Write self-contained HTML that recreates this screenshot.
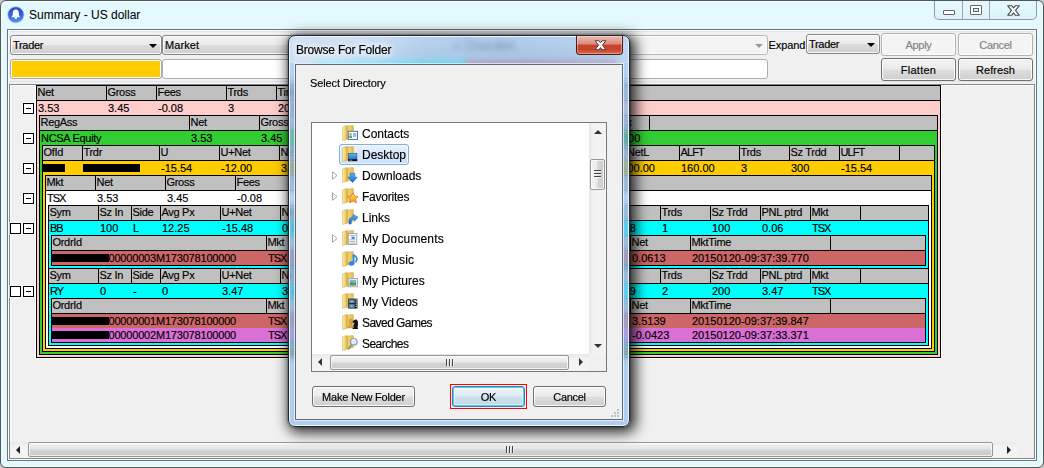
<!DOCTYPE html><html><head><meta charset="utf-8"><title>Summary - US dollar</title><style>
*{box-sizing:border-box;margin:0;padding:0}
html,body{width:1044px;height:468px;overflow:hidden;background:#c8c8c8}
body{-webkit-text-stroke-width:.16px;position:relative;font-family:"Liberation Sans",sans-serif;font-size:11px;color:#000}
.a{position:absolute}
.t{position:absolute;white-space:nowrap;line-height:14px;height:14px}
/* main window */
#win{left:0;top:0;width:1044px;height:468px;border:1px solid #4c595b;border-radius:6px;background:#e4f9fe;box-shadow:inset 0 0 0 1px #f4fcfe}
#client{left:7px;top:29px;width:1030px;height:432px;border:1px solid #6b7678;background:#f0f0f0;box-shadow:inset 0 0 0 1px #fff}
#title{-webkit-text-stroke-width:.05px;left:29px;top:8.400px;font-size:12px;line-height:14px;white-space:nowrap}
.btn{letter-spacing:-.3px;position:absolute;border:1px solid #707070;border-radius:3px;background:linear-gradient(#f2f2f2 0%,#ebebeb 48%,#dddddd 52%,#cfcfcf 100%);box-shadow:inset 0 0 0 1px rgba(255,255,255,.85);text-align:center;white-space:nowrap}
.btn.dis{background:#f4f4f4;border-color:#adb2b5;color:#838383;box-shadow:inset 0 0 0 1px #fcfcfc}
.combo{letter-spacing:-.3px;position:absolute;border:1px solid #858585;border-radius:3px;background:linear-gradient(#f2f2f2 0%,#ebebeb 48%,#dddddd 52%,#cfcfcf 100%);box-shadow:inset 0 0 0 1px rgba(255,255,255,.85);white-space:nowrap}
.arrow{position:absolute;width:0;height:0;border-left:4px solid transparent;border-right:4px solid transparent;border-top:4px solid #000}
/* tree */
.box{position:absolute;border:1px solid #000}
.hc{position:absolute;height:16px;border:1px solid #000;background:#c0c0c0;line-height:12px;padding-left:.5px;white-space:nowrap;overflow:hidden;letter-spacing:-.3px}
.l{letter-spacing:-.3px}
.o{letter-spacing:-.19px}
.u{letter-spacing:-1.05px}
.pm{position:absolute;width:11px;height:11px;border:1px solid #000;background:#fff;box-shadow:0 0 0 1px rgba(255,255,255,.55)}
.pm.m:after{content:"";position:absolute;left:2px;top:4px;width:5px;height:1px;background:#000}
.bar{position:absolute;background:#000;height:8px}
</style></head><body>
<div id="win" class="a"></div>
<svg class="a" style="left:6px;top:5.200px" width="19" height="19" viewBox="0 0 19 19"><defs><linearGradient id="ig" x1="0" y1="0" x2="0" y2="1"><stop offset="0" stop-color="#2a4cd4"/><stop offset=".5" stop-color="#335fe2"/><stop offset="1" stop-color="#5596fb"/></linearGradient></defs><circle cx="9.800" cy="9.800" r="8.100" fill="url(#ig)" stroke="#b9c8f6" stroke-width="0.7"/><g transform="translate(.3 .3)"><path d="M9.5 4.3c-2 0-3 1.6-3 3.6 0 2-.6 3.2-1.500 4.100h9c-.9-.9-1.500-2.100-1.500-4.100 0-2-1-3.600-3-3.600z" fill="#fff"/><circle cx="9.5" cy="12.6" r="1.200" fill="#fff"/></g></svg>
<div id="title" class="a">Summary - US dollar</div>
<div class="a" style="left:934px;top:1px;width:103px;height:19px;border:1px solid #8a9aa0;border-top:none;border-radius:0 0 5px 5px;background:linear-gradient(#e6f8fd,#dcf2f9)"></div>
<div class="a" style="left:962px;top:1px;width:1px;height:18px;background:#9aa8ad"></div><div class="a" style="left:989px;top:1px;width:1px;height:18px;background:#9aa8ad"></div>
<div class="a" style="left:943px;top:10px;width:12px;height:5px;border:1px solid #5d686c;background:#fff;border-radius:1px"></div>
<div class="a" style="left:970px;top:5px;width:12px;height:10px;border:1px solid #5d686c;background:#fff;border-radius:1px"></div><div class="a" style="left:973px;top:8px;width:6px;height:4px;border:1px solid #5d686c;background:#dbeef5"></div>
<svg class="a" style="left:1007px;top:4.500px" width="13" height="11" viewBox="0 0 13 11"><path d="M0.800 0.800h4l1.700 2.100 1.700-2.100h4l-3.700 4.600 3.700 4.800h-4l-1.700-2.300-1.700 2.300h-4l3.700-4.800z" fill="#fff" stroke="#434c50" stroke-width="1.100" stroke-linejoin="round"/></svg>
<div id="client" class="a"></div>
<div class="combo" style="left:10px;top:35px;width:152px;height:20px;"><span class="t" style="left:2px;top:2px;line-height:15px">Trader</span><span class="arrow" style="right:4px;top:8px;border-top-color:#000"></span></div>
<div class="combo" style="left:162px;top:35px;width:152px;height:20px;letter-spacing:.1px;"><span class="t" style="left:2px;top:2px;line-height:15px">Market</span><span class="arrow" style="right:4px;top:8px;border-top-color:#000"></span></div>
<div class="combo" style="left:314px;top:35px;width:152px;height:20px;"><span class="t" style="left:2px;top:2px;line-height:15px">Symbol</span><span class="arrow" style="right:4px;top:8px;border-top-color:#000"></span></div>
<div class="combo" style="left:466px;top:35px;width:152px;height:20px;"><span class="t" style="left:2px;top:2px;line-height:15px">Execution</span><span class="arrow" style="right:4px;top:8px;border-top-color:#000"></span></div>
<div class="combo" style="left:618px;top:35px;width:150px;height:20px;background:#f4f4f4;border-color:#b5b8bb;box-shadow:inset 0 0 0 1px #fbfbfb;"><span class="t" style="left:2px;top:2px;line-height:15px"></span><span class="arrow" style="right:4px;top:8px;border-top-color:#9a9a9a"></span></div>
<div class="t" style="left:768.500px;top:38px;letter-spacing:-.1px">Expand</div>
<div class="combo" style="left:806px;top:34px;width:74px;height:20px;"><span class="t" style="left:2px;top:2px;line-height:15px">Trader</span><span class="arrow" style="right:4px;top:8px;border-top-color:#000"></span></div>
<div class="btn dis" style="left:881px;top:33px;width:75px;height:23px;line-height:22px">Apply</div>
<div class="btn dis" style="left:958px;top:33px;width:75px;height:23px;line-height:22px">Cancel</div>
<div class="btn" style="left:881px;top:58px;width:75px;height:23px;line-height:22px;letter-spacing:0.25px">Flatten</div>
<div class="btn" style="left:958px;top:58px;width:75px;height:23px;line-height:22px;letter-spacing:0.05px">Refresh</div>
<div class="a" style="left:10px;top:59px;width:152px;height:20px;border:1px solid #abadb3;border-radius:3px;background:#ffcc00;box-shadow:inset 0 0 0 1px #fff"></div>
<div class="a" style="left:162px;top:59px;width:606px;height:20px;border:1px solid #abadb3;border-radius:3px;background:#fff"></div>
<div class="a" style="left:314px;top:60px;width:152px;height:18px;background:#00ffff"></div><div class="a" style="left:466px;top:60px;width:152px;height:18px;background:#cd6666"></div>
<div class="a" style="left:9px;top:81px;width:1026px;height:1px;background:#dde3ea"></div><div class="a" style="left:9px;top:31px;width:1026px;height:1px;background:#dfe4ea"></div>
<div class="a" style="left:9px;top:84px;width:1026px;height:375px;border:1px solid #828790;background:#f0f0f0;box-shadow:inset 1px 1px 0 0 #fff"></div>
<div class="a" style="left:35px;top:85px;width:1px;height:273px;background:#fff"></div><div class="a" style="left:941px;top:85px;width:1px;height:273px;background:#fff"></div><div class="a" style="left:35px;top:358px;width:907px;height:1px;background:#fff"></div>
<div class="box" style="left:36px;top:85px;width:905px;height:273px;background:#ffcccc"></div>
<div class="hc" style="left:36px;top:85px;width:71px">Net</div>
<div class="hc" style="left:106px;top:85px;width:51px">Gross</div>
<div class="hc" style="left:156px;top:85px;width:71px">Fees</div>
<div class="hc" style="left:226px;top:85px;width:51px">Trds</div>
<div class="hc" style="left:276px;top:85px;width:71px">Time</div>
<div class="hc" style="left:346px;top:85px;width:71px"></div>
<div class="hc" style="left:416px;top:85px;width:71px"></div>
<div class="hc" style="left:486px;top:85px;width:71px"></div>
<div class="hc" style="left:556px;top:85px;width:385px"></div>
<div class="a" style="left:37px;top:101px;width:903px;height:14px;background:#ffcccc"></div>
<div class="t" style="left:38px;top:101px">3.53</div>
<div class="t" style="left:108px;top:101px">3.45</div>
<div class="t" style="left:158px;top:101px">-0.08</div>
<div class="t" style="left:228px;top:101px">3</div>
<div class="t" style="left:278px;top:101px">20150120</div>
<div class="pm m" style="left:23px;top:103px"></div>
<div class="box" style="left:39px;top:115px;width:899px;height:240px;background:#32cd32"></div>
<div class="hc" style="left:39px;top:115px;width:151px">RegAss</div>
<div class="hc" style="left:189px;top:115px;width:71px">Net</div>
<div class="hc" style="left:259px;top:115px;width:71px">Gross</div>
<div class="hc" style="left:329px;top:115px;width:61px"></div>
<div class="hc" style="left:389px;top:115px;width:61px"></div>
<div class="hc" style="left:449px;top:115px;width:61px"></div>
<div class="hc" style="left:509px;top:115px;width:61px"></div>
<div class="hc" style="left:569px;top:115px;width:81px;padding-left:56.5px">x</div>
<div class="hc" style="left:649px;top:115px;width:289px"></div>
<div class="a" style="left:40px;top:131px;width:897px;height:14px;background:#32cd32"></div>
<div class="t l" style="left:41px;top:131px">NCSA Equity</div>
<div class="t" style="left:191px;top:131px">3.53</div>
<div class="t" style="left:261px;top:131px">3.45</div>
<div class="t" style="left:622px;top:131px">300</div>
<div class="pm m" style="left:23px;top:133px"></div>
<div class="box" style="left:42px;top:145px;width:893px;height:207px;background:#ffcc00"></div>
<div class="hc" style="left:42px;top:145px;width:41px">OfId</div>
<div class="hc" style="left:82px;top:145px;width:78px">Trdr</div>
<div class="hc" style="left:159px;top:145px;width:61px">U</div>
<div class="hc" style="left:219px;top:145px;width:61px">U+Net</div>
<div class="hc" style="left:279px;top:145px;width:61px">Net</div>
<div class="hc" style="left:339px;top:145px;width:61px"></div>
<div class="hc" style="left:399px;top:145px;width:61px"></div>
<div class="hc" style="left:459px;top:145px;width:61px"></div>
<div class="hc" style="left:519px;top:145px;width:61px"></div>
<div class="hc" style="left:579px;top:145px;width:42px"></div>
<div class="hc" style="left:620px;top:145px;width:60px;padding-left:6px">NetL</div>
<div class="hc" style="left:679px;top:145px;width:61px;letter-spacing:-.9px">ALFT</div>
<div class="hc" style="left:739px;top:145px;width:51px">Trds</div>
<div class="hc" style="left:789px;top:145px;width:51px">Sz Trdd</div>
<div class="hc" style="left:839px;top:145px;width:61px;letter-spacing:-.9px">ULFT</div>
<div class="hc" style="left:899px;top:145px;width:36px"></div>
<div class="a" style="left:43px;top:161px;width:891px;height:14px;background:#ffcc00"></div>
<div class="t" style="left:161px;top:161px">-15.54</div>
<div class="t" style="left:221px;top:161px">-12.00</div>
<div class="t" style="left:281px;top:161px">3.53</div>
<div class="t" style="left:621.3px;top:161px">100.00</div>
<div class="t" style="left:681px;top:161px">160.00</div>
<div class="t" style="left:741px;top:161px">3</div>
<div class="t" style="left:791px;top:161px">300</div>
<div class="t" style="left:841px;top:161px">-15.54</div>
<div class="bar" style="left:43px;top:164px;width:22px"></div>
<div class="bar" style="left:83px;top:164px;width:57px"></div>
<div class="pm m" style="left:23px;top:163px"></div>
<div class="box" style="left:45px;top:175px;width:887px;height:174px;background:#fff"></div>
<div class="hc" style="left:45px;top:175px;width:51px">Mkt</div>
<div class="hc" style="left:95px;top:175px;width:71px">Net</div>
<div class="hc" style="left:165px;top:175px;width:71px">Gross</div>
<div class="hc" style="left:235px;top:175px;width:71px">Fees</div>
<div class="hc" style="left:305px;top:175px;width:627px"></div>
<div class="a" style="left:46px;top:191px;width:885px;height:14px;background:#fff"></div>
<div class="t u" style="left:47px;top:191px">TSX</div>
<div class="t" style="left:97px;top:191px">3.53</div>
<div class="t" style="left:167px;top:191px">3.45</div>
<div class="t" style="left:237px;top:191px">-0.08</div>
<div class="pm m" style="left:23px;top:193px"></div>
<div class="box" style="left:48px;top:205px;width:881px;height:141px;background:#00ffff"></div>
<div class="hc" style="left:48px;top:205px;width:51px">Sym</div>
<div class="hc" style="left:98px;top:205px;width:34px">Sz In</div>
<div class="hc" style="left:131px;top:205px;width:30px">Side</div>
<div class="hc" style="left:160px;top:205px;width:61px">Avg Px</div>
<div class="hc" style="left:220px;top:205px;width:61px">U+Net</div>
<div class="hc" style="left:280px;top:205px;width:61px">Net</div>
<div class="hc" style="left:340px;top:205px;width:61px"></div>
<div class="hc" style="left:400px;top:205px;width:61px"></div>
<div class="hc" style="left:460px;top:205px;width:61px"></div>
<div class="hc" style="left:520px;top:205px;width:61px"></div>
<div class="hc" style="left:580px;top:205px;width:81px"></div>
<div class="hc" style="left:660px;top:205px;width:51px">Trds</div>
<div class="hc" style="left:710px;top:205px;width:51px">Sz Trdd</div>
<div class="hc" style="left:760px;top:205px;width:51px">PNL ptrd</div>
<div class="hc" style="left:810px;top:205px;width:51px">Mkt</div>
<div class="hc" style="left:860px;top:205px;width:69px"></div>
<div class="a" style="left:49px;top:221px;width:879px;height:14px;background:#00ffff"></div>
<div class="t u" style="left:50px;top:221px">BB</div>
<div class="t" style="left:100px;top:221px">100</div>
<div class="t l" style="left:133px;top:221px">L</div>
<div class="t" style="left:162px;top:221px">12.25</div>
<div class="t" style="left:222px;top:221px">-15.48</div>
<div class="t" style="left:282px;top:221px">0.06</div>
<div class="t" style="left:629.8px;top:221px">8</div>
<div class="t" style="left:662px;top:221px">1</div>
<div class="t" style="left:712px;top:221px">100</div>
<div class="t" style="left:762px;top:221px">0.06</div>
<div class="t u" style="left:812px;top:221px">TSX</div>
<div class="pm" style="left:10px;top:223px"></div>
<div class="pm m" style="left:23px;top:223px"></div>
<div class="box" style="left:51px;top:235px;width:875px;height:31px;background:#cd6666"></div>
<div class="hc" style="left:51px;top:235px;width:216px">OrdrId</div>
<div class="hc" style="left:266px;top:235px;width:51px">Mkt</div>
<div class="hc" style="left:316px;top:235px;width:61px"></div>
<div class="hc" style="left:376px;top:235px;width:61px"></div>
<div class="hc" style="left:436px;top:235px;width:61px"></div>
<div class="hc" style="left:496px;top:235px;width:61px"></div>
<div class="hc" style="left:556px;top:235px;width:75px"></div>
<div class="hc" style="left:630px;top:235px;width:61px">Net</div>
<div class="hc" style="left:690px;top:235px;width:141px">MktTime</div>
<div class="hc" style="left:830px;top:235px;width:96px"></div>
<div class="a" style="left:52px;top:251px;width:873px;height:14px;background:#cd6666"></div>
<div class="t o" style="left:108.5px;top:251px">00000003M173078100000</div>
<div class="t u" style="left:268px;top:251px">TSX</div>
<div class="t" style="left:632px;top:251px">0.0613</div>
<div class="t" style="left:692px;top:251px">20150120-09:37:39.770</div>
<div class="bar" style="left:52px;top:254px;width:57px"></div>
<div class="hc" style="left:48px;top:268px;width:51px">Sym</div>
<div class="hc" style="left:98px;top:268px;width:34px">Sz In</div>
<div class="hc" style="left:131px;top:268px;width:30px">Side</div>
<div class="hc" style="left:160px;top:268px;width:61px">Avg Px</div>
<div class="hc" style="left:220px;top:268px;width:61px">U+Net</div>
<div class="hc" style="left:280px;top:268px;width:61px">Net</div>
<div class="hc" style="left:340px;top:268px;width:61px"></div>
<div class="hc" style="left:400px;top:268px;width:61px"></div>
<div class="hc" style="left:460px;top:268px;width:61px"></div>
<div class="hc" style="left:520px;top:268px;width:61px"></div>
<div class="hc" style="left:580px;top:268px;width:81px"></div>
<div class="hc" style="left:660px;top:268px;width:51px">Trds</div>
<div class="hc" style="left:710px;top:268px;width:51px">Sz Trdd</div>
<div class="hc" style="left:760px;top:268px;width:51px">PNL ptrd</div>
<div class="hc" style="left:810px;top:268px;width:51px">Mkt</div>
<div class="hc" style="left:860px;top:268px;width:69px"></div>
<div class="a" style="left:49px;top:284px;width:879px;height:14px;background:#00ffff"></div>
<div class="t u" style="left:50px;top:284px">RY</div>
<div class="t" style="left:100px;top:284px">0</div>
<div class="t" style="left:133px;top:284px">-</div>
<div class="t" style="left:162px;top:284px">0</div>
<div class="t" style="left:222px;top:284px">3.47</div>
<div class="t" style="left:282px;top:284px">3.47</div>
<div class="t" style="left:629.8px;top:284px">9</div>
<div class="t" style="left:662px;top:284px">2</div>
<div class="t" style="left:712px;top:284px">200</div>
<div class="t" style="left:762px;top:284px">3.47</div>
<div class="t u" style="left:812px;top:284px">TSX</div>
<div class="pm" style="left:10px;top:286px"></div>
<div class="pm m" style="left:23px;top:286px"></div>
<div class="box" style="left:51px;top:298px;width:875px;height:45px;background:#cd6666"></div>
<div class="hc" style="left:51px;top:298px;width:216px">OrdrId</div>
<div class="hc" style="left:266px;top:298px;width:51px">Mkt</div>
<div class="hc" style="left:316px;top:298px;width:61px"></div>
<div class="hc" style="left:376px;top:298px;width:61px"></div>
<div class="hc" style="left:436px;top:298px;width:61px"></div>
<div class="hc" style="left:496px;top:298px;width:61px"></div>
<div class="hc" style="left:556px;top:298px;width:75px"></div>
<div class="hc" style="left:630px;top:298px;width:61px">Net</div>
<div class="hc" style="left:690px;top:298px;width:141px">MktTime</div>
<div class="hc" style="left:830px;top:298px;width:96px"></div>
<div class="a" style="left:52px;top:314px;width:873px;height:14px;background:#cd6666"></div>
<div class="t o" style="left:108.5px;top:314px">00000001M173078100000</div>
<div class="t u" style="left:268px;top:314px">TSX</div>
<div class="t" style="left:632px;top:314px">3.5139</div>
<div class="t" style="left:692px;top:314px">20150120-09:37:39.847</div>
<div class="bar" style="left:52px;top:317px;width:57px"></div>
<div class="a" style="left:52px;top:328px;width:873px;height:14px;background:#da70d6"></div>
<div class="t o" style="left:108.5px;top:328px">00000002M173078100000</div>
<div class="t u" style="left:268px;top:328px">TSX</div>
<div class="t" style="left:632px;top:328px">-0.0423</div>
<div class="t" style="left:692px;top:328px">20150120-09:37:33.371</div>
<div class="bar" style="left:52px;top:331px;width:57px"></div>
<div class="a" style="left:10px;top:442px;width:1007px;height:16px;background:linear-gradient(#e9e9e9,#f3f3f3 30%,#f3f3f3)"></div>
<div class="a" style="left:28px;top:442px;width:965px;height:15px;border:1px solid #979797;border-radius:2px;background:linear-gradient(#f3f3f3 0%,#e7e7e7 40%,#d3d3d3 58%,#c6c6c6 100%);box-shadow:inset 0 0 0 1px rgba(255,255,255,.7)"></div>
<div class="a" style="left:16px;top:446px;width:0;height:0;border-top:4px solid transparent;border-bottom:4px solid transparent;border-right:4px solid #222"></div>
<div class="a" style="left:1007px;top:446px;width:0;height:0;border-top:4px solid transparent;border-bottom:4px solid transparent;border-left:4px solid #222"></div>
<div class="a" style="left:506px;top:446px;width:2px;height:7px;background:linear-gradient(90deg,#444 0,#444 60%,#f4f4f4 60%)"></div>
<div class="a" style="left:509px;top:446px;width:2px;height:7px;background:linear-gradient(90deg,#444 0,#444 60%,#f4f4f4 60%)"></div>
<div class="a" style="left:512px;top:446px;width:2px;height:7px;background:linear-gradient(90deg,#444 0,#444 60%,#f4f4f4 60%)"></div>
<style>
#dshadow{left:288px;top:35px;width:342px;height:392px;border-radius:7px;box-shadow:3px 3px 13px 3px rgba(0,0,0,.78),0 0 3px 0 rgba(0,0,0,.5)}
#dglass{left:288px;top:35px;width:342px;height:392px;border-radius:7px;border:1px solid #1e2a38;-webkit-backdrop-filter:blur(3.5px);backdrop-filter:blur(3.5px);background:rgba(140,186,238,.64);box-shadow:inset 0 0 0 1px rgba(255,255,255,.8)}
#dclient{left:295px;top:64px;width:328px;height:356px;border:1px solid #5d6b7a;background:#f0f0f0;box-shadow:0 0 0 1px rgba(255,255,255,.65)}
#dtitle{left:296px;top:43px;letter-spacing:-.2px;font-size:12px;line-height:14px;white-space:nowrap;text-shadow:0 0 6px #fff,0 0 8px #fff,0 0 10px #fff}
#dclose{left:576px;top:36px;width:47px;height:19px;border:1px solid #4a1f1a;border-top:none;border-radius:0 0 4px 4px;background:linear-gradient(#ecbcb0 0%,#dd8b79 45%,#c9432a 50%,#c8452c 75%,#d9694a 100%);box-shadow:inset 0 0 0 1px rgba(255,255,255,.35)}
#lb{left:311px;top:122px;width:296px;height:250px;border:1px solid #767a80;background:#fff}
.it{position:absolute;left:362px;font-size:12px;line-height:16px;height:16px;white-space:nowrap}
.ic{position:absolute;left:342px;width:16px;height:16px}
.ex{position:absolute;left:332px;width:6px;height:9px}
.dbtn{position:absolute;height:21px;border:1px solid #707070;border-radius:3px;background:linear-gradient(#f2f2f2 0%,#ebebeb 48%,#dddddd 52%,#cfcfcf 100%);box-shadow:inset 0 0 0 1px rgba(255,255,255,.85);text-align:center;line-height:21px;white-space:nowrap;font-size:11px;letter-spacing:-.3px}
</style>
<div id="dshadow" class="a"></div><div id="dglass" class="a"></div>
<div class="a" style="left:290px;top:37px;width:338px;height:26px;border-radius:5px 5px 0 0;background:linear-gradient(100deg,rgba(255,255,255,.42) 0%,rgba(255,255,255,.5) 14%,rgba(255,255,255,.12) 40%,rgba(255,255,255,.05) 70%,rgba(255,255,255,.2) 100%)"></div>
<div id="dtitle" class="a">Browse For Folder</div>
<div id="dclose" class="a"></div>
<svg class="a" style="left:594px;top:40px" width="13" height="10.500" viewBox="0 0 13 11"><path d="M0.800 0.800h4l1.700 2.100 1.700-2.100h4l-3.700 4.600 3.700 4.800h-4l-1.700-2.300-1.700 2.300h-4l3.700-4.800z" fill="#fff" stroke="#47383a" stroke-width="1" stroke-linejoin="round"/></svg>
<div id="dclient" class="a"></div>
<div class="t" style="left:310px;top:76px;letter-spacing:-.12px">Select Directory</div>
<div id="lb" class="a"></div>
<svg width="0" height="0" style="position:absolute"><defs>
<linearGradient id="fg1" x1="0" y1="0" x2="1" y2="0"><stop offset="0" stop-color="#fbeeb4"/><stop offset=".6" stop-color="#f0d376"/><stop offset="1" stop-color="#e0b446"/></linearGradient>
<linearGradient id="fg2" x1="0" y1="0" x2="1" y2="0"><stop offset="0" stop-color="#dcb24a"/><stop offset=".3" stop-color="#efd277"/><stop offset="1" stop-color="#e3b94e"/></linearGradient>
<linearGradient id="bl" x1="0" y1="0" x2="0" y2="1"><stop offset="0" stop-color="#5db4f6"/><stop offset="1" stop-color="#1468d2"/></linearGradient>
<linearGradient id="st" x1="0" y1="0" x2="0" y2="1"><stop offset="0" stop-color="#ffe860"/><stop offset="1" stop-color="#f5921a"/></linearGradient>
<g id="fold"><path d="M4.800 1.100L10.800 0.500Q11.400 0.500 11.400 1.100L11.400 12.400L4.800 14.200Z" fill="url(#fg2)" stroke="#d1aa46" stroke-width="0.5"/><path d="M0.400 2.200L4.200 0.500L5 0.900L5 14.200L1 15.500L0.400 15Z" fill="url(#fg1)" stroke="#cda43e" stroke-width="0.5"/></g>
</defs></svg>
<svg class="ic" style="top:124.5px" viewBox="0 0 16 16"><use href="#fold"/><rect x="6.300" y="6.300" width="9.200" height="8.200" fill="#fdfdfd" stroke="#3f7ab8" stroke-width="1"/><circle cx="8.600" cy="9.200" r="1.300" fill="#e0a060"/><rect x="7.300" y="10.600" width="2.600" height="2.400" fill="#5c9c5c"/><path d="M11 9h3.200M11 11h3.200" stroke="#4a78b0" stroke-width="1"/></svg>
<div class="it" style="top:126px">Contacts</div>
<div class="a" style="left:339px;top:144px;width:70px;height:21px;border:1px solid #84acdd;border-radius:3px;background:linear-gradient(#e8f2fd,#c9dffa);box-shadow:inset 0 0 0 1px rgba(255,255,255,.6)"></div>
<svg class="ic" style="top:145.5px" viewBox="0 0 16 16"><use href="#fold"/><rect x="6.300" y="7.600" width="8.600" height="6.800" fill="url(#bl)" stroke="#274a85" stroke-width="0.6"/><rect x="6" y="13.200" width="9.200" height="2" fill="#111"/><rect x="6.600" y="13.700" width="1" height="1" fill="#e33"/><rect x="7.900" y="13.700" width="1" height="1" fill="#3c3"/><rect x="9.200" y="13.700" width="1" height="1" fill="#fc3"/></svg>
<div class="it" style="top:147px">Desktop</div>
<svg class="ic" style="top:166.5px" viewBox="0 0 16 16"><use href="#fold"/><path d="M8.200 6.200h4.600v4h2.400l-4.700 5.300l-4.700-5.300h2.400z" fill="url(#bl)" stroke="#1560b8" stroke-width="0.6"/></svg>
<div class="it" style="top:168px">Downloads</div>
<svg class="ex" style="top:171px" viewBox="0 0 6 9"><path d="M0.500 0.700L5 4.500L0.500 8.300Z" fill="#fff" stroke="#a6a6a6" stroke-width="1"/></svg>
<svg class="ic" style="top:187.5px" viewBox="0 0 16 16"><use href="#fold"/><path d="M11 4.600l1.600 3.400 3.700 0.500-2.700 2.600 0.700 3.700-3.300-1.800-3.300 1.800 0.700-3.700-2.700-2.600 3.700-0.500z" fill="url(#st)" stroke="#e0661c" stroke-width="0.700"/></svg>
<div class="it" style="top:189px;letter-spacing:-0.23px">Favorites</div>
<svg class="ex" style="top:192px" viewBox="0 0 6 9"><path d="M0.500 0.700L5 4.500L0.500 8.300Z" fill="#fff" stroke="#a6a6a6" stroke-width="1"/></svg>
<svg class="ic" style="top:208.5px" viewBox="0 0 16 16"><use href="#fold"/><path d="M7.200 15.200C6.200 11 8 7.800 11.500 7.600L11 5.200L16 8.200L12.600 12.200L12.200 9.900C10 10.100 8.600 11.600 9.400 14.600Z" fill="url(#bl)" stroke="#1558ac" stroke-width="0.5"/></svg>
<div class="it" style="top:210px">Links</div>
<svg class="ic" style="top:229.5px" viewBox="0 0 16 16"><use href="#fold"/><rect x="6.200" y="3.500" width="8.600" height="11" fill="#fff" stroke="#8a8f98" stroke-width="0.8"/><path d="M7.500 5.500h6M7.500 9.800h6M7.500 11.500h6M7.500 13.200h6" stroke="#9aa0aa" stroke-width="0.8"/><rect x="9.500" y="6.600" width="3.200" height="2.400" fill="#3a8be8"/></svg>
<div class="it" style="top:231px;letter-spacing:0.15px">My Documents</div>
<svg class="ex" style="top:234px" viewBox="0 0 6 9"><path d="M0.500 0.700L5 4.500L0.500 8.300Z" fill="#fff" stroke="#a6a6a6" stroke-width="1"/></svg>
<svg class="ic" style="top:250.5px" viewBox="0 0 16 16"><use href="#fold"/><ellipse cx="9.500" cy="12.600" rx="2.700" ry="2" fill="#2c8df0" stroke="#1a6cc8" stroke-width="0.4"/><path d="M11.600 12.600V4C15 5 15.600 9 13.600 11.200" fill="none" stroke="#2483e6" stroke-width="1.700"/></svg>
<div class="it" style="top:252px;letter-spacing:0.19px">My Music</div>
<svg class="ic" style="top:271.5px" viewBox="0 0 16 16"><use href="#fold"/><rect x="6.200" y="6.400" width="9.300" height="8.400" fill="#f6f6f6" stroke="#9a9a9a" stroke-width="0.8"/><rect x="7.600" y="7.800" width="6.500" height="5.600" fill="#78b8ec"/><path d="M7.600 13.400v-2.200l2.200-1.400 2 1.200 2.300-1v3.400z" fill="#5a9a4a"/></svg>
<div class="it" style="top:273px">My Pictures</div>
<svg class="ic" style="top:292.5px" viewBox="0 0 16 16"><use href="#fold"/><rect x="6.200" y="5.600" width="9.300" height="10" fill="#262626"/><rect x="7" y="6.500" width="5.600" height="3.600" fill="#3d8fd8"/><rect x="7" y="11.200" width="5.600" height="3.600" fill="#3d8fd8"/><circle cx="9.800" cy="8.500" r="1.100" fill="#e8a040"/><circle cx="9.800" cy="13.200" r="1.100" fill="#e8a040"/><path d="M14.300 6.300v9" stroke="#eee" stroke-width="1" stroke-dasharray="1.100,1.100"/></svg>
<div class="it" style="top:294px">My Videos</div>
<svg class="ic" style="top:313.5px" viewBox="0 0 16 16"><use href="#fold"/><path d="M10.500 15v-1.600h1.200c-0.600-2.600 0.400-3.600 1-5l-1.600 0.700-0.800-1c1.200-1.800 2.600-2.800 4.400-2.400 1.800 1.200 1.600 5.500 0.600 7.700h0.700v1.600z" fill="#151515"/><circle cx="8.600" cy="6.800" r="1.700" fill="#d9a84a" stroke="#a87820" stroke-width="0.4"/><path d="M7.600 8.600h2l0.400 3.800h1v1.400h-4.800v-1.400h1z" fill="#d9a84a" stroke="#a87820" stroke-width="0.4"/></svg>
<div class="it" style="top:315px;letter-spacing:-0.55px">Saved Games</div>
<svg class="ic" style="top:334.5px" viewBox="0 0 16 16"><use href="#fold"/><path d="M9.700 9.500L6.800 13.800" stroke="#8f8f8f" stroke-width="1.900" stroke-linecap="round"/><circle cx="11.800" cy="6.800" r="3.300" fill="#d9ecfb" stroke="#8a9aaa" stroke-width="1.200"/><path d="M10 6c0.600-1.200 2-1.700 3.200-1.200" fill="none" stroke="#fff" stroke-width="0.8"/></svg>
<div class="it" style="top:336px;letter-spacing:-0.54px">Searches</div>
<div class="a" style="left:589px;top:123px;width:17px;height:231px;background:linear-gradient(90deg,#e6e6e6,#f2f2f2 25%,#f4f4f4)"></div>
<div class="a" style="left:590px;top:159px;width:15px;height:31px;border:1px solid #979797;border-radius:2px;background:linear-gradient(90deg,#f4f4f4 0%,#eaeaea 45%,#d4d4d4 55%,#cdcdcd 100%);box-shadow:inset 0 0 0 1px rgba(255,255,255,.7)"></div>
<div class="a" style="left:594px;top:170px;width:7px;height:2px;background:linear-gradient(#444 0,#444 60%,#f4f4f4 60%)"></div>
<div class="a" style="left:594px;top:173px;width:7px;height:2px;background:linear-gradient(#444 0,#444 60%,#f4f4f4 60%)"></div>
<div class="a" style="left:594px;top:176px;width:7px;height:2px;background:linear-gradient(#444 0,#444 60%,#f4f4f4 60%)"></div>
<div class="a" style="left:594px;top:130px;width:0;height:0;border-left:4px solid transparent;border-right:4px solid transparent;border-bottom:4px solid #333"></div>
<div class="a" style="left:594px;top:344px;width:0;height:0;border-left:4px solid transparent;border-right:4px solid transparent;border-top:4px solid #333"></div>
<div class="a" style="left:312px;top:354px;width:277px;height:17px;background:linear-gradient(#e6e6e6,#f2f2f2 25%,#f4f4f4)"></div>
<div class="a" style="left:589px;top:354px;width:17px;height:17px;background:#f0f0f0"></div>
<div class="a" style="left:330px;top:355px;width:239px;height:15px;border:1px solid #979797;border-radius:2px;background:linear-gradient(#f4f4f4 0%,#eaeaea 45%,#d4d4d4 55%,#cdcdcd 100%);box-shadow:inset 0 0 0 1px rgba(255,255,255,.7)"></div>
<div class="a" style="left:446px;top:359px;width:2px;height:7px;background:linear-gradient(90deg,#444 0,#444 60%,#f4f4f4 60%)"></div>
<div class="a" style="left:449px;top:359px;width:2px;height:7px;background:linear-gradient(90deg,#444 0,#444 60%,#f4f4f4 60%)"></div>
<div class="a" style="left:452px;top:359px;width:2px;height:7px;background:linear-gradient(90deg,#444 0,#444 60%,#f4f4f4 60%)"></div>
<div class="a" style="left:318px;top:358px;width:0;height:0;border-top:4px solid transparent;border-bottom:4px solid transparent;border-right:4px solid #333"></div>
<div class="a" style="left:579px;top:358px;width:0;height:0;border-top:4px solid transparent;border-bottom:4px solid transparent;border-left:4px solid #333"></div>
<div class="dbtn" style="left:312px;top:386px;width:103px;letter-spacing:-.22px">Make New Folder</div>
<div class="a" style="left:450px;top:384px;width:77px;height:25px;border:1px solid #f00"></div>
<div class="dbtn" style="left:452px;top:386px;width:73px;border-color:#3c7fb1;background:linear-gradient(#edf5fa 0%,#dfebf2 48%,#cfe0eb 52%,#c2d7e5 100%);box-shadow:inset 0 0 0 1px #46d0f5,inset 0 0 0 2px rgba(255,255,255,.45)">OK</div>
<div class="dbtn" style="left:533px;top:386px;width:73px">Cancel</div>
<div class="a" style="left:617px;top:415px;width:2px;height:2px;background:#b8c0c8"></div>
<div class="a" style="left:614px;top:415px;width:2px;height:2px;background:#b8c0c8"></div>
<div class="a" style="left:611px;top:415px;width:2px;height:2px;background:#b8c0c8"></div>
<div class="a" style="left:617px;top:412px;width:2px;height:2px;background:#b8c0c8"></div>
<div class="a" style="left:614px;top:412px;width:2px;height:2px;background:#b8c0c8"></div>
<div class="a" style="left:617px;top:409px;width:2px;height:2px;background:#b8c0c8"></div>
</body></html>
